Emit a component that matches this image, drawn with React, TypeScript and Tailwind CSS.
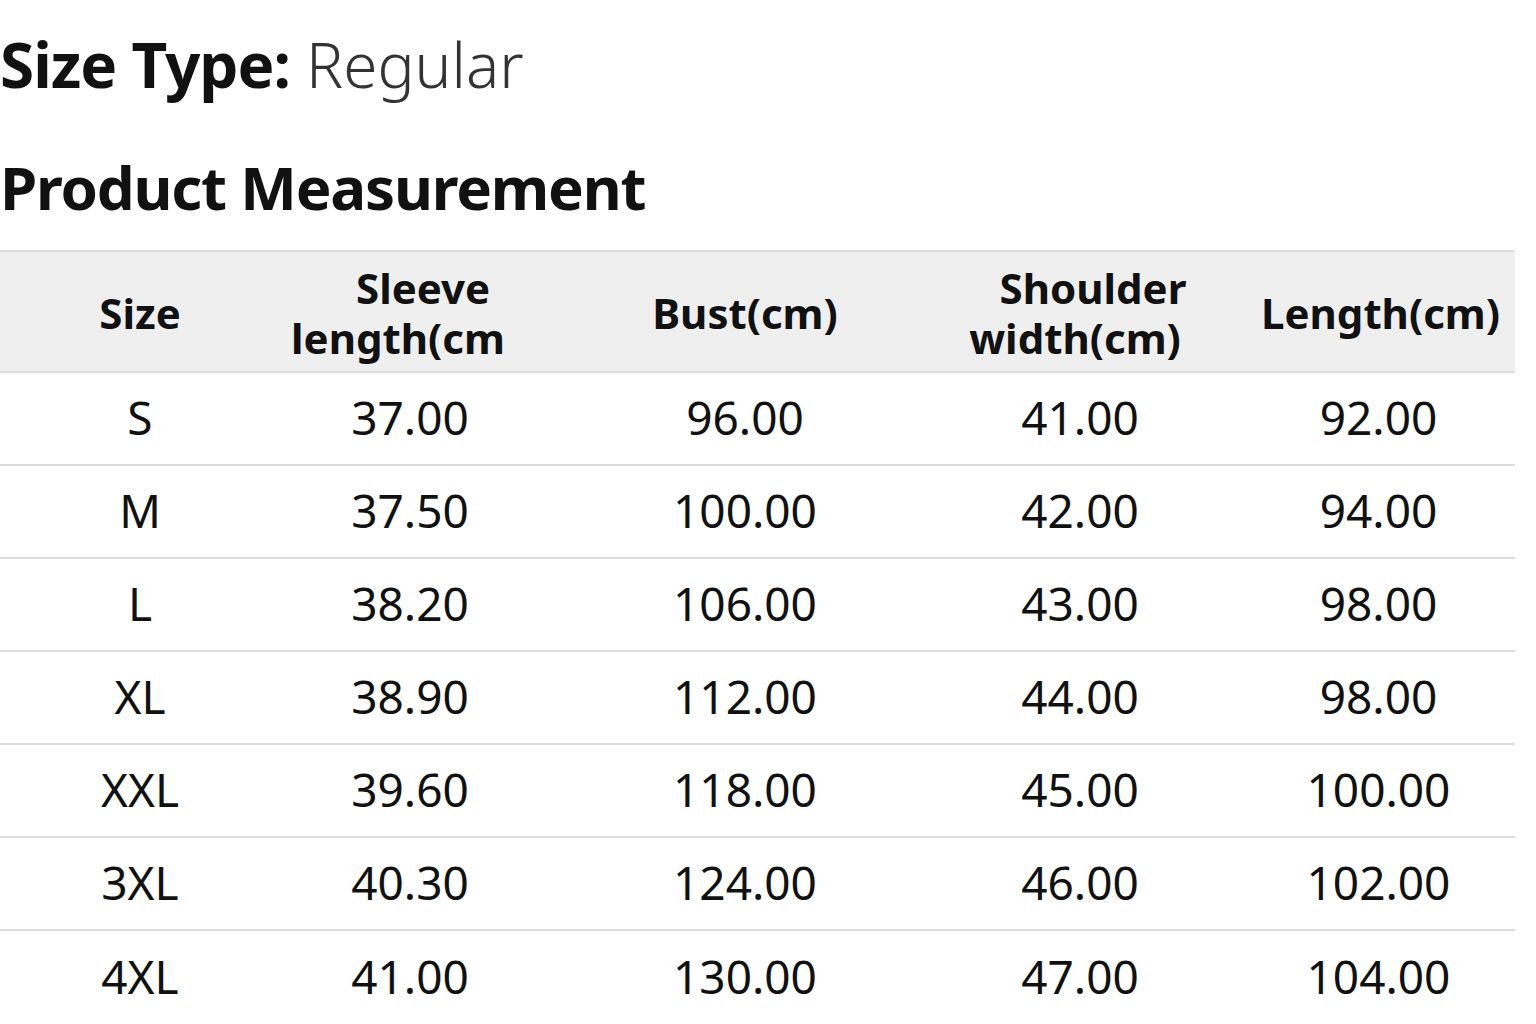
const headers = [
  ["Size"],
  ["Sleeve", "length(cm"],
  ["Bust(cm)"],
  ["Shoulder", "width(cm)"],
  ["Length(cm)"],
];

const rows = [
  ["S", "37.00", "96.00", "41.00", "92.00"],
  ["M", "37.50", "100.00", "42.00", "94.00"],
  ["L", "38.20", "106.00", "43.00", "98.00"],
  ["XL", "38.90", "112.00", "44.00", "98.00"],
  ["XXL", "39.60", "118.00", "45.00", "100.00"],
  ["3XL", "40.30", "124.00", "46.00", "102.00"],
  ["4XL", "41.00", "130.00", "47.00", "104.00"],
];

const cols = "grid grid-cols-[280px_260px_410px_260px_305px]";

export default function App() {
  return (
    <div className="w-[1536px] h-[1024px] overflow-hidden bg-white text-[#111] font-['Noto_Sans',sans-serif]">
      {/* Size type */}
      <div className="h-[130px] flex items-center text-[62px] leading-none pb-[2px]">
        <span className="font-bold tracking-[-1px]">Size Type:</span>
        <span className="ml-[16px] text-[#333] font-light">Regular</span>
      </div>

      {/* Heading */}
      <h2 className="h-[120px] flex items-center text-[60px] font-bold leading-none tracking-[-1.2px] pb-[6px]">
        Product Measurement
      </h2>

      {/* Table */}
      <div className="w-[1515px]">
        <div className={`${cols} h-[123px] bg-[#efefef] border-y-2 border-[#dcdcdc] items-center text-[42px] font-bold leading-[50px] pt-[2px]`}>
          {headers.map((h, i) => (
            <div key={i} className={`text-center ${i === 4 ? "pl-[36px]" : ""}`}>
              {h.length === 1 ? (
                <div>{h[0]}</div>
              ) : (
                <>
                  <div className="pl-[26px]">{h[0]}</div>
                  <div className={i === 3 ? "pr-[10px]" : "pr-[24px]"}>{h[1]}</div>
                </>
              )}
            </div>
          ))}
        </div>

        {rows.map((r, ri) => (
          <div
            key={r[0]}
            className={`${cols} h-[93px] items-center text-[46px] leading-none pb-[4px] ${ri < rows.length - 1 ? "border-b-2 border-[#dcdcdc]" : ""}`}
          >
            {r.map((c, i) => (
              <div key={i} className={`text-center ${i === 4 ? "pl-[32px]" : ""}`}>
                {c}
              </div>
            ))}
          </div>
        ))}
      </div>
    </div>
  );
}
